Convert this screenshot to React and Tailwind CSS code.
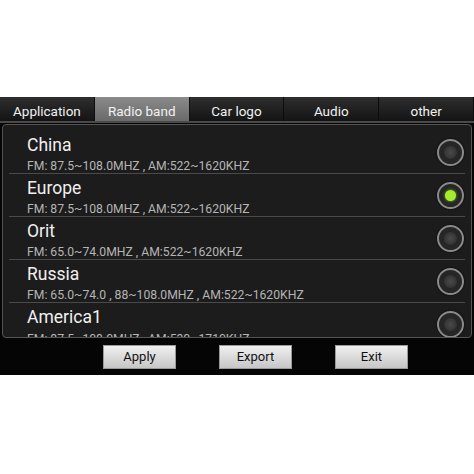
const tabs = ['Application', 'Radio band', 'Car logo', 'Audio', 'other'];

const bands = [
    { name: 'China', info: 'FM: 87.5~108.0MHZ , AM:522~1620KHZ' },
    { name: 'Europe', info: 'FM: 87.5~108.0MHZ , AM:522~1620KHZ', on: true },
    { name: 'Orit', info: 'FM: 65.0~74.0MHZ , AM:522~1620KHZ' },
    { name: 'Russia', info: 'FM: 65.0~74.0 , 88~108.0MHZ , AM:522~1620KHZ' },
    { name: 'America1', info: 'FM: 87.5~108.0MHZ , AM:530~1710KHZ' },
];

const Radio = ({ on }) => (
    <div className="w-[27px] h-[27px] rounded-full border-2 border-[#8a8a8a] bg-[#262626] flex items-center justify-center shadow-[0_0_2px_#000]">
        {on ? (
            <div className="w-[11px] h-[11px] rounded-full bg-[#a6ec2c] shadow-[0_0_3px_#7fc21c]" />
        ) : (
            <div className="w-[13px] h-[13px] rounded-full bg-[radial-gradient(circle,#4a4a4a,#2a2a2a)]" />
        )}
    </div>
);

export default function App() {
    return (
        <div className="w-[474px] h-[474px] bg-white flex flex-col font-['Roboto',sans-serif]">
            <div className="h-[97px]" />
            <div className="h-[278px] bg-[#050505] flex flex-col">
                <div className="h-[26px] flex border-b-2 border-[#4a4a4a] bg-[linear-gradient(#2e2e2e,#141414)]">
                    {tabs.map((t, i) => (
                        <div
                            key={t}
                            className={
                                i === 1
                                    ? 'flex-1 flex items-center justify-center pt-[4px] text-[13.5px] text-[#f2f2f2] bg-[linear-gradient(#8a8a8a,#6a6a6a)] border-r border-[#111]'
                                    : 'flex-1 flex items-center justify-center pt-[4px] text-[13.5px] text-[#f2f2f2] border-r border-[#0c0c0c]'
                            }
                        >
                            {t}
                        </div>
                    ))}
                </div>
                <div className="mx-[2px] mt-[1px] h-[214px] rounded-[4px] border border-[#555] bg-[#1c1c1c] overflow-hidden pt-[6px] px-[6px]">
                    {bands.map((b, i) => (
                        <div
                            key={b.name}
                            className={
                                i < bands.length - 1
                                    ? 'h-[43px] flex items-center border-b border-[#4a4a4a]'
                                    : 'h-[43px] flex items-center'
                            }
                        >
                            <div className="flex-1 pl-[18px] pt-[5px] leading-none">
                                <div className="text-[17.5px] text-[#f0f0f0] mb-[6px]">{b.name}</div>
                                <div className="text-[12.2px] text-[#b5b5b5]">{b.info}</div>
                            </div>
                            <div className="pr-[1px]">
                                <Radio on={b.on} />
                            </div>
                        </div>
                    ))}
                </div>
                <div className="flex gap-[43px] mt-[7px] pl-[103px]">
                    {['Apply', 'Export', 'Exit'].map((b) => (
                        <button
                            key={b}
                            className="w-[73px] h-[24px] text-[13px] text-[#111] bg-[linear-gradient(#f0f0f0,#c6c6c6)] border border-[#9a9a9a]"
                        >
                            {b}
                        </button>
                    ))}
                </div>
            </div>
        </div>
    );
}
